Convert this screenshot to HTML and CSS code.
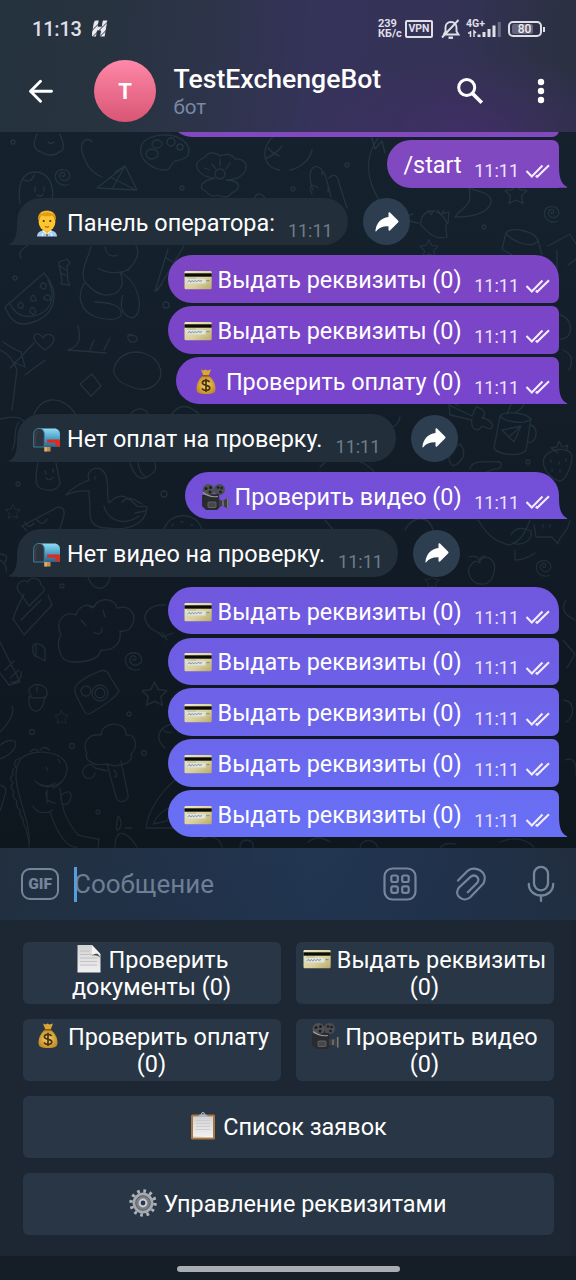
FILE: index.html
```html
<!DOCTYPE html>
<html lang="ru">
<head>
<meta charset="utf-8">
<title>TestExchengeBot</title>
<link rel="stylesheet" href="styles.css">
</head>
<body>
<svg class="defs" width="0" height="0" aria-hidden="true">
  <defs>
    <linearGradient id="gold" x1="0" y1="0" x2="1" y2="1"><stop offset="0" stop-color="#efe9c0"/><stop offset=".6" stop-color="#d8cf9c"/><stop offset="1" stop-color="#b9aa68"/></linearGradient>
    <linearGradient id="blue" x1="0" y1="0" x2="0" y2="1"><stop offset="0" stop-color="#8fdcf4"/><stop offset=".5" stop-color="#4fa3cb"/><stop offset="1" stop-color="#2b6288"/></linearGradient>
    <linearGradient id="paper" x1="0" y1="0" x2="0" y2="1"><stop offset="0" stop-color="#d2d2d2"/><stop offset="1" stop-color="#f0f0f0"/></linearGradient>
    <radialGradient id="bag"><stop offset="0" stop-color="#f7d774"/><stop offset="1" stop-color="#c58f25"/></radialGradient>
  </defs>
  <symbol id="card" viewBox="0 0 28 28">
    <rect x=".5" y="5" width="27.2" height="18.2" rx="1.2" fill="url(#gold)"/>
    <rect x=".5" y="7.3" width="27.2" height="3.4" fill="#0b0b08"/>
    <rect x="2.5" y="13" width="19" height="4.5" fill="#dfe4dc"/>
    <path d="M3.5 16l2-1.6 1 1.6 2-1.4 1 1.2 2-1.2 1 1 2-1.2 1.500 1 2-1M22.500 14.700h3" fill="none" stroke="#4d6b95" stroke-width=".7"/>
    <path d="M3 12h9" stroke="#a59e70" stroke-width=".6"/>
  </symbol>
  <symbol id="money" viewBox="0 0 28 28">
    <path d="M9 1.500l2.500 1 2-1 2 1 3.500-1-2.500 6.500h-5z" fill="#d9a637"/>
    <path d="M10.500 8h6.500c4 3 6.500 8 6.500 12.500 0 4-2 5.500-9.500 5.500s-9.500-1.500-9.500-5.500C4.500 16 7 11 10.500 8z" fill="url(#bag)"/>
    <path d="M10.500 7.800h6.800" stroke="#8a5a1c" stroke-width="1.600"/>
    <path d="M17.600 14c-1-1.300-2.200-1.700-3.700-1.700-2 0-3.500 1-3.500 2.500 0 3.500 7.400 1.500 7.400 5 0 1.600-1.700 2.600-3.800 2.600-1.700 0-3.100-.6-4-1.900M14 10.700v13.400" fill="none" stroke="#4a3210" stroke-width="1.700"/>
  </symbol>
  <symbol id="man" viewBox="0 0 28 28">
    <path d="M4 27.500c0-3.500 2-5.500 6-6h8c4 .5 6 2.500 6 6z" fill="#a9cdf0"/>
    <path d="M10.500 19h7v3.500l-3.500 2.500-3.500-2.500z" fill="#f3b52e"/>
    <path d="M9.500 21.500l4.500 3.500 4.500-3.500M9 27l1-3M19 27l-1-3" fill="none" stroke="#e8f3fd" stroke-width="1.300"/>
    <path d="M14 24.800v2.700" stroke="#6d573a" stroke-width="1.400"/>
    <ellipse cx="14" cy="12.800" rx="8.400" ry="9.300" fill="#fdc62f"/>
    <path d="M5.300 12C4 5.500 8 1.500 14 1.500S24 5.500 22.700 12c-.8-3.500-2-5-3.500-5.500-4 1.300-8 1-10.500 0-1.600 1-2.700 2.500-3.400 5.500z" fill="#e39c16"/>
    <path d="M8 4.500c3-2.300 8-2.500 11.500 0" stroke="#f9cf58" fill="none"/>
    <circle cx="10.700" cy="12" r="1.100" fill="#50351a"/><circle cx="17.300" cy="12" r="1.100" fill="#50351a"/>
    <path d="M12 17.500c1.300.8 2.700.8 4 0" stroke="#b0501e" fill="none" stroke-width="1.200"/>
  </symbol>
  <symbol id="mail" viewBox="0 0 28 28">
    <path d="M11 20h6.500v6.500H11z" fill="#c08d52"/><path d="M13 21v5.500" stroke="#e3bc84" stroke-width="1.300"/>
    <path d="M6 3.500h15c4 0 6 2.500 6 6V22H9z" fill="url(#blue)"/>
    <path d="M.7 22V9.500C.7 5.500 3 3.500 6 3.500s5.300 2 5.300 6V22z" fill="#2a3440" stroke="#3f7f9e"/>
    <path d="M2.700 20v-9c0-3 1.500-4.500 3.300-4.500" fill="none" stroke="#4c3b38" stroke-width="1.200"/>
    <path d="M14 14.500h12.800v7h-4.300v-3.800H14z" fill="#df2b1c"/>
  </symbol>
  <symbol id="cam" viewBox="0 0 28 28">
    <circle cx="7.500" cy="7" r="6" fill="#4f5155"/><circle cx="18.500" cy="6.500" r="5.500" fill="#4b4d51"/>
    <g fill="#1d1e21"><circle cx="5" cy="5.500" r="1.500"/><circle cx="9.500" cy="4.500" r="1.500"/><circle cx="9" cy="9" r="1.500"/><circle cx="17" cy="4.500" r="1.300"/><circle cx="20.500" cy="5" r="1.300"/><circle cx="19.500" cy="9" r="1.300"/></g>
    <path d="M1 12l17-1 1 13-3 3H5l-4-4z" fill="#2a2b2e"/>
    <path d="M2 9.500c4 3 9 5 15 4" fill="none" stroke="#9b9da0" stroke-width="1.200"/>
    <path d="M18 17l4 .5 5.500-3v11.500l-5.500-3-4 .5z" fill="#3c3e42"/>
    <path d="M26.800 15v10.500M22 17.500v5.500" stroke="#85878b" stroke-width="1.200"/>
    <rect x="7" y="19" width="8" height="5.500" rx="1" fill="#45474b" stroke="#6b6d71" stroke-width=".8"/>
  </symbol>
  <symbol id="doc" viewBox="0 0 28 28">
    <path d="M2.500 0H17l8.500 9v18.500h-23z" fill="url(#paper)"/>
    <path d="M5 6h10M5 9.500h12M5 13h17M5 16.500h17M5 20h17" stroke="#bdbdbd" stroke-width=".9"/>
    <path d="M17 0l8.500 13c-2.500-2.500-5-3-8.500-2.500z" fill="#4b4b4b"/>
    <path d="M17 0l8.500 9.300c-3-.8-5-.8-8.500.7z" fill="#f3f3f3"/>
  </symbol>
  <symbol id="clip" viewBox="0 0 28 28">
    <rect x="2" y="2.500" width="24" height="25" rx="1.500" fill="#a87844"/>
    <path d="M4 4.500h20v20H4z" fill="url(#paper)"/>
    <path d="M4 24.500l20-.5v1.500H4z" fill="#fff"/>
    <path d="M7 8.500h14M7 11.500h14M7 14.500h14M7 17.500h14" stroke="#c8c8cc" stroke-width=".8"/>
    <path d="M8 5l3-2.500h6L20 5z" fill="#a9b6c5"/><circle cx="14" cy="2" r="1.500" fill="none" stroke="#b5c0cd"/>
  </symbol>
  <symbol id="gear" viewBox="0 0 28 28">
    <circle cx="14" cy="14" r="12" fill="none" stroke="#aeb4be" stroke-width="3.400" stroke-dasharray="2.700 3.583"/>
    <circle cx="14" cy="14" r="10.500" fill="#a5a9b0"/><circle cx="14" cy="14" r="7.300" fill="#7b7e83" stroke="#5c5f65"/>
    <circle cx="14" cy="14" r="3.400" fill="#293746" stroke="#c9ced6" stroke-width="2"/>
  </symbol>
  <symbol id="ticks" viewBox="0 0 26 16"><path d="M1.500 8l5.300 5.500L17.500 2.500M10.800 12.600l1.400 1.200L24 2.300" fill="none" stroke="#f3ecff" stroke-width="2.100"/></symbol>
  <symbol id="share" viewBox="0 0 24 20"><path d="M13.500 1.200c0-1 .8-1.300 1.500-.6l8 7.900c.7.700.7 1.300 0 2l-8 7.900c-.7.700-1.500.4-1.500-.6v-3.600C8 14 4 15.500 1.200 19.200.8 19.700.3 19.500.4 18.900 1.300 11 6 5.900 13.500 5z" fill="#fff"/></symbol>
  <symbol id="star" viewBox="-12 -12 24 24"><path d="M0-11l3.300 6.600 7.700 1-5.500 5.300 1.500 7.600L0 6l-7 3.500 1.500-7.600L-11-3.400l7.700-1z"/></symbol>
  <symbol id="swirl" viewBox="-10 -10 20 20"><path d="M6 8C0 11-8 7-8.500 0S-3-9 2-8s8 8 3 11-10-1-9-5 6-4 6-1-3 3-3 1"/></symbol>
</svg>

<div class="phone">
  <header class="top">
    <div class="status">
      <span class="clock">11:13</span><span class="brand">H</span>
      <span class="speed">239<br>КБ/с</span>
      <span class="vpn">VPN</span>
      <svg class="bell" width="20" height="21" viewBox="0 0 20 21" fill="none" stroke="#e0dfe8" stroke-width="1.900"><path d="M3 15.500h14.500l-2-3V8.500c0-3-2-5.500-5.500-5.500S4.500 5.500 4.500 8.500v4L2.500 16M1 18.500L17.500 1"/><path d="M7.500 18.700h4.500" stroke-width="2.400"/></svg>
      <span class="signal"><b>4G+</b>
        <svg width="34" height="16" viewBox="0 0 34 16"><path d="M1 11h2M3.500 9v6M7 15V9l2 2" stroke="#e0dfe8" stroke-width="1.500" fill="none"/><path d="M12 12.500V15M17 10v5M22 7v8M27 3.500V15" stroke="#e0dfe8" stroke-width="3"/><path d="M32.300 0v15" stroke="#6c6985" stroke-width="3"/></svg>
      </span>
      <span class="battery"><i>80</i></span>
    </div>
    <div class="bar">
      <svg class="back" width="26" height="26" viewBox="0 0 26 26" fill="none" stroke="#fff" stroke-width="2.900" stroke-linecap="round" stroke-linejoin="round"><path d="M23.500 13.300H3M12.500 3.300L2.500 13.300l10 10"/></svg>
      <div class="avatar">T</div>
      <div class="who"><h1>TestExchengeBot</h1><p>бот</p></div>
      <svg class="search" width="28" height="28" viewBox="0 0 28 28" fill="none" stroke="#fff" stroke-width="3"><circle cx="10.700" cy="10.500" r="8"/><path d="M16.500 16.500l9.300 9.300" stroke-width="3.700"/></svg>
      <svg class="more" width="8" height="26" viewBox="0 0 8 26" fill="#fff"><circle cx="4" cy="4" r="3.200"/><circle cx="4" cy="13" r="3.200"/><circle cx="4" cy="22" r="3.200"/></svg>
    </div>
  </header>

  <main class="chat">
    <svg class="doodles" width="576" height="716" viewBox="0 132 576 716" fill="none" stroke="#243541" stroke-width="1.300" stroke-linecap="round" stroke-linejoin="round">
      <path d="M37 134c-5 10-3 16 4 18 6 4 14 4 18 0 6-1 5-8 1-18M48 142c2 2 4 2 6 0"/>
      <path d="M92 142c-2-4-8-3-10 2s1 12 4 18c3 8 9 12 16 15M97 188l28-22 12 24-40-2zM125 166l-13 23M110 177l26 13M125 166l-10 6"/>
      <path d="M141 147c2-9 16-13 27-12 12 1 21 8 21 16s-9 9-14 10c-5 2-4 9-9 9-14 0-28-11-25-23z"/><ellipse cx="157" cy="144" rx="5" ry="4"/><circle cx="171" cy="142" r="4"/><circle cx="180" cy="147" r="3"/><ellipse cx="152" cy="154" rx="6" ry="5"/>
      <path d="M215 178c-12 0-20-8-18-15 2-5 8-4 9-7 3-5 11-3 14 0 5-3 12-2 15 3 6-1 12 3 11 9-1 7-9 12-20 12 8 0 14 3 12 8-1 4-6 3-8 7-4 4-10 1-12 0-6 3-10-1-12-4-6-1-9-9 9-13z"/><circle cx="220" cy="174" r="5"/><path d="M212 164l4 5M220 159v7M230 163l-4 6M204 168l6 2"/>
      <path d="M20 204c-3-18 2-32 15-32s20 12 17 30M35 187v5M44 187v4M37 195q4 3 6-1M24 180q8 3 10-5"/>
      <path d="M278 134c-18 8-18 34 2 36M266 158q8-2 16-12M254 202c1-10 6-10 11-4l8 7M290 170c10-2 20-10 22-20M268 148q5 6 12 8"/>
      <path d="M313 190c-6-16-2-25 5-23s9 14 13 30M318 188c-8-6-9-1-6 6M329 178c5-6 9-2 10 5l8 25M322 172v3M328 188v4M320 201l6 5"/>
      <path d="M378 138c-14 20-12 40 1 62M371 135l4 14 7-8 3 12"/>
      <path d="M413 214c-8 2-6 8 6 9M443 213c8 0 6-5 5 10-4 0-1 13-1 14-12 4-20-6-26-12-2-14 17-22 26-2M428 210l3 5 3-5M438 210l3 5 3-5M469 188c8 3 24 5 22 15-4 10-18 14-36 14 8-12 18-9 14-29z"/>
      <path d="M506 233c5-7 28-2 32 7M506 233c4 8 28 17 32 7M506 233l-4 16 10 6M538 240l4 15M548 246l22-12 6 10M557 250v20M568 265l8-6"/>
      <path d="M21 258c-4-7 3-9 8-14M59 262l8-3 3 4-3 3 1 15 2 4-9-1 1-4-3-15zM60 266l6 4M61 273l6 3"/>
      <path d="M5 307l39-34c20 24 8 48-20 51-10 0-15-7-19-17zM9 302c5 10 12 18 29 13 14-6 18-18 10-35M42 283q5 0 4 4t-6 0zM33 295q-5 5 0 6t2-4zM46 295q-5 4 1 5t2-5zM20 302q-4 5 0 6t3-4zM31 308q-3 5 2 6t1-6z"/>
      <path d="M91 246c-2 12-12 24-6 36-9 14-5 29 11 35 10 3 22 4 25-2 3-10-15-13-26-13M105 247q2 12 13 8M122 272q9-2 14-13c3-6 2-9 0-13M98 268q13 8 31 2M86 283q14 17 30 10 10-7 4-21c22 12 24 43 12 46-12-3-12-15-9-23"/>
      <path d="M155 291l13-42M157 291l27-45M166 258l7 4M155 291l7-7"/>
      <path d="M45 350c-22-16-5-20-2-12 4-9 21 0 2 12zM78 326c3 13 2 20-10 24l38 3M90 350l4-10M3 342q12 8 18 10l4 15-12-5M104 350l6-12M133 336c-8-6-6 8 1 6s1-9-4-6M10 368l24-25M25 375l20-15"/>
      <path d="M120 358c14-12 36-4 40 10s-10 25-26 20-28-15-14-30zM0 350q12 5 17 20l-5 40M0 419q20-5 24 3M80 384l12-10 9 12-10 10zM33 418c5-22 30-25 43-3M12 450c6-9 0-20 7-28"/>
      <path d="M171 415q12-17 29 0M130 416q3-8 12-7c7 2 6 5 4 7M38 463c-3 14-3 22 2 25 10 5 19 1 20-5l-4-20M45 471l1 3M53 469v3M46 478q4 4 7-1M130 463c4 13 11 18 17 14 7-4 10-6 8-14M138 463q2 12 8 14"/>
      <path d="M89 480c-5-12 15-19 18 0 2 13-1 14 2 23 12-13 20-5 28 3 5 2 8-1 10 1-1 18-20 24-40 21-15 0-18-8-17-20l-1-17q-12-1-23 4 9-10 23-15M104 506c3 14 20 21 35 10M122 502c7-7 13-2 20 2M135 513l10-2M95 477v2"/>
      <path d="M22 526l36-19q7 0 6 8l-4 14M22 526l5 5M25 522q4 8 9 1M37 520q6 7 10-1M164 530c4-18 33-20 38 0M172 526l1-2M181 522h2M191 525h2"/>
      <path d="M0 560q8 5 6 12M0 554q10 1 5 8M18 590c-3-6 5-12 10-8 3-6 13-4 13 3 4 2 4 6 1 8L29 606zM88 577c5 16 20 14 22 0M13 620c2-10 7-17 11-26M14 620l10 15 28-30-4-10M21 620l20-20"/>
      <path d="M60 652c-4-12 0-15 1-17-7-15 4-24 15-20 2-8 12-13 17-7 6-12 22-10 24 0 14-4 20 8 15 17-2 5-7 7-12 6 2 12-6 20-19 19-2 10-17 12-27 12-8 0-13-4-14-10zM81 620l5 6M103 610l2 7M94 632q8 5 8-4M95 606l-5 1"/>
      <path d="M0 642l20 40-11 3-9-12M14 661l-9 9M19 670l-9 8M11 682c8 1 11-5 10-10M33 648q-1 8 5 9l7 4v-8c2-10-14-12-12-5M36 645v10"/>
      <path d="M145 619c-1-8 8-15 20-14M145 619c2 8 8 11 14 14l4 4 10-4M162 632l5 8"/>
      <path d="M31 695c-6-6 2-12 10-10 7 2 8 10 3 14 0 10-7 14-11 11-5-2-4-9-4-13zM29 697q9 2 16 0M37 687v5"/>
      <path d="M75 687q5-8 25-16 7-2 9 4l10 16q-4 8-28 22-5 3-8-4l-8-16z"/><circle cx="86" cy="691" r="5"/><circle cx="100" cy="693" r="8"/><circle cx="100" cy="693" r="5"/>
      <path d="M107 764c-15 3-23-5-20-11-5-8 0-20 14-18 0-14 26-15 25 0 11-2 12 14 5 19 3 9-10 11-16 12zM107 764l9 33c2 8 14 4 12-2l-7-34M107 771l-12-3c-5-8-14 0-12 6s11 6 12-1M114 770q5 6 1 7"/>
      <path d="M29 847c4-29-23-65-9-87 8-12 46-11 47 8 0 8-6 18-14 20M35 781c10 10 26 6 31-6M40 784q8 4 15-1M47 790c-3 8 1 12 8 13M47 791l0 12M60 788c2 20 4 30 18 47q16 4 21 4l-1 8M50 812c8 24 18 36 27 35M33 806c4 8 13 8 20 4M61 800c-2-9 12-11 10-3-2 8-5 8-9 7M46 767l2 4M58 759l2 4"/>
      <path d="M20 758l-4 2q-3 4 0 7-5 2-3 8-5 3 0 8-4 4 1 9-3 4 3 9-2 5 3 9-1 5 3 9 0 6 3 9l1 6 2 8M30 752q4-5 8-1M40 750q5-5 9 0"/>
      <path d="M0 745q8-6 14-4c5 2 0 13-14 18M0 785q8 2 5 10l-5 16M12 706q4 10-12 26"/>
      <path d="M171 724c-14 4-16 16-6 24M163 730q5 4 9 2M175 780c-14 12-27 30-29 48h28M153 824c5-12 15-16 20-18l-6 15zM118 816c5 5 3 12 0 14s-1-9 0-14M125 828h7M115 847c0-20 12-16 22 0"/>
      <path d="M400 417c-2 8-5 9-8 10M450 415l-1-10 23 11 4-9c10 2 10 8 6 11 8 1 14 8 8 11l-8-3c-4 7-12 3-10-6zM458 405l-8-3"/>
      <path d="M500 416l-6 32c2 6 25 10 32 2l5-31c-5-6-25-9-31-3zM500 416c5 6 25 9 31 3M530 425c9 0 8 20-3 17M502 430l19-4-7 16-5-5zM521 426l-12 11M507 414l5-12M516 412q8-4 8-10"/>
      <path d="M544 458c4-10 26-12 28-2 0 10-7 25-12 25-10-2-19-14-16-23zM558 453l-7-5 6-1 2-6 3 6 6-2-2 6M551 460v2M559 462v2M566 459v2M552 469v2M560 470v2"/>
      <path d="M460 444c-12 6-14 15-7 22 9-4 15-12 7-22zM470 469c1-8 12-8 30-7 3 4 0 8-6 7l-10 4M320 467c12-15 44-10 55 6M325 520l10 12 18 4M405 530c8-15 24-15 28 0M478 520c8 13 16 22 32 25 12-5 15-12 20-25M511 535c4-8 12-8 20-4 2 8-8 16-18 12M534 525l2 12h16l6 7c0-8 10-10 12-24M543 525v2M550 525v2M515 550v10q10 0 20-7"/>
      <path d="M479 562c7-10 18-2 15 10-1 9-8 13-13 12-10 0-16-13-10-19q3-5 8-3zM480 563q-2-6 5-7M480 561q-4-7-11-4"/>
      <use href="#swirl" x="54" y="168" width="18" height="18"/><use href="#swirl" x="543" y="205" width="18" height="18"/><use href="#swirl" x="534" y="559" width="20" height="18"/><use href="#swirl" x="124" y="651" width="20" height="20"/>
      <use href="#star" x="504" y="182" width="24" height="24"/><use href="#star" x="5" y="504" width="16" height="16"/><use href="#star" x="141" y="681" width="27" height="27"/><use href="#star" x="54" y="710" width="15" height="15"/><use href="#star" x="419" y="239" width="20" height="20"/><use href="#star" x="424" y="574" width="16" height="16"/>
      <g><circle cx="13" cy="142" r="2"/><circle cx="182" cy="188" r="2"/><circle cx="347" cy="165" r="2"/><circle cx="293" cy="189" r="2"/><circle cx="484" cy="227" r="2"/><circle cx="15" cy="278" r="2"/><circle cx="166" cy="305" r="3"/><circle cx="18" cy="484" r="2"/><circle cx="164" cy="494" r="3"/><circle cx="528" cy="462" r="2"/><circle cx="62" cy="586" r="2"/><circle cx="32" cy="732" r="2.500"/><circle cx="72" cy="746" r="2.500"/><circle cx="129" cy="714" r="2"/><circle cx="144" cy="753" r="2.500"/><circle cx="98" cy="812" r="2"/></g>
      <path d="M560 315c14 3 14 25 0 24M563 350c10 4 10 12 6 20M566 600q-8 12 9 20M563 640l12 14-8 14M564 700c12 2 10 18 2 22M565 760q12-5 11 15M200 840c10-8 22 0 22 8M240 848q0-8 7-8 7 1 6 8M308 842q10-8 22 0M360 848c0-10 16-10 18 0M440 848q4-6 16-4M500 842q20-8 34 5"/>
    </svg>

    <div class="row out cut"><div class="bubble wide"></div></div>
    <div class="row out"><div class="bubble mid tail"><span class="msg">/start</span><time>11:11</time><svg class="ticks"><use href="#ticks"/></svg></div></div>
    <div class="row in gap"><div class="bubble tail"><svg class="emoji"><use href="#man"/></svg><span class="msg">Панель оператора:</span><time>11:11</time></div><span class="share"><svg width="24" height="20"><use href="#share"/></svg></span></div>
    <div class="row out gap"><div class="bubble"><svg class="emoji"><use href="#card"/></svg><span class="msg">Выдать реквизиты (0)</span><time>11:11</time><svg class="ticks"><use href="#ticks"/></svg></div></div>
    <div class="row out"><div class="bubble mid"><svg class="emoji"><use href="#card"/></svg><span class="msg">Выдать реквизиты (0)</span><time>11:11</time><svg class="ticks"><use href="#ticks"/></svg></div></div>
    <div class="row out"><div class="bubble mid tail"><svg class="emoji"><use href="#money"/></svg><span class="msg">Проверить оплату (0)</span><time>11:11</time><svg class="ticks"><use href="#ticks"/></svg></div></div>
    <div class="row in gap"><div class="bubble tail"><svg class="emoji"><use href="#mail"/></svg><span class="msg">Нет оплат на проверку.</span><time>11:11</time></div><span class="share"><svg width="24" height="20"><use href="#share"/></svg></span></div>
    <div class="row out gap"><div class="bubble tail"><svg class="emoji"><use href="#cam"/></svg><span class="msg">Проверить видео (0)</span><time>11:11</time><svg class="ticks"><use href="#ticks"/></svg></div></div>
    <div class="row in gap"><div class="bubble tail"><svg class="emoji"><use href="#mail"/></svg><span class="msg">Нет видео на проверку.</span><time>11:11</time></div><span class="share"><svg width="24" height="20"><use href="#share"/></svg></span></div>
    <div class="row out gap"><div class="bubble"><svg class="emoji"><use href="#card"/></svg><span class="msg">Выдать реквизиты (0)</span><time>11:11</time><svg class="ticks"><use href="#ticks"/></svg></div></div>
    <div class="row out"><div class="bubble mid"><svg class="emoji"><use href="#card"/></svg><span class="msg">Выдать реквизиты (0)</span><time>11:11</time><svg class="ticks"><use href="#ticks"/></svg></div></div>
    <div class="row out"><div class="bubble mid"><svg class="emoji"><use href="#card"/></svg><span class="msg">Выдать реквизиты (0)</span><time>11:11</time><svg class="ticks"><use href="#ticks"/></svg></div></div>
    <div class="row out"><div class="bubble mid"><svg class="emoji"><use href="#card"/></svg><span class="msg">Выдать реквизиты (0)</span><time>11:11</time><svg class="ticks"><use href="#ticks"/></svg></div></div>
    <div class="row out"><div class="bubble mid tail"><svg class="emoji"><use href="#card"/></svg><span class="msg">Выдать реквизиты (0)</span><time>11:11</time><svg class="ticks"><use href="#ticks"/></svg></div></div>
  </main>

  <div class="compose">
    <span class="gif">GIF</span>
    <span class="field">Сообщение</span>
    <svg class="grid" width="34" height="34" viewBox="0 0 34 34" fill="none" stroke="#75859b" stroke-width="2.200"><rect x="1.500" y="1.500" width="31" height="31" rx="8"/><rect x="8.300" y="8.500" width="6.500" height="6.500" rx="1.800"/><rect x="19.200" y="8.500" width="6.500" height="6.500" rx="1.800"/><rect x="8.300" y="19.300" width="6.500" height="6.500" rx="1.800"/><rect x="19.200" y="19.300" width="6.500" height="6.500" rx="1.800"/></svg>
    <svg class="attach" width="30" height="34" viewBox="0 0 30 34" fill="none" stroke="#75859b" stroke-width="2.200" stroke-linecap="round"><path d="M2 13.500L11.500 4C18-2 33 4 27.500 16.500L14 30.500C7 36-3 28 3 20.500L15 9.500c5-3 9 2 6.500 6L11.800 25.300"/></svg>
    <svg class="mic" width="28" height="38" viewBox="0 0 28 38" fill="none" stroke="#75859b" stroke-width="2.300" stroke-linecap="round"><rect x="7" y="1.800" width="14" height="23.500" rx="7"/><path d="M1.800 19c0 7 5.500 11.500 12.200 11.500S26.200 26 26.200 19M14 30.500v5.500"/></svg>
  </div>

  <section class="keyboard">
    <button><svg class="emoji"><use href="#doc"/></svg>Проверить<br>документы (0)</button>
    <button><svg class="emoji"><use href="#card"/></svg>Выдать реквизиты<br>(0)</button>
    <button><svg class="emoji"><use href="#money"/></svg>Проверить оплату<br>(0)</button>
    <button><svg class="emoji"><use href="#cam"/></svg>Проверить видео<br>(0)</button>
    <button class="full"><svg class="emoji"><use href="#clip"/></svg>Список заявок</button>
    <button class="full"><svg class="emoji"><use href="#gear"/></svg>Управление реквизитами</button>
  </section>
  <footer class="nav"><span></span></footer>
</div>
</body>
</html>
```
FILE: styles.css
```css
* { box-sizing: border-box; }
body { margin: 0; background: #151e28; font-family: Roboto, "Noto Sans", sans-serif; color: #fff; }
svg { display: block; flex: none; }
.defs { position: absolute; }
.phone { width: 576px; height: 1280px; display: flex; flex-direction: column; overflow: hidden; }

.top {
  height: 132px; flex: none; display: flex; flex-direction: column;
  background:
    radial-gradient(ellipse 190px 75px at 475px 128px, rgba(66, 46, 105, .75), transparent),
    linear-gradient(95deg, #25333f 0, #27333f 18%, #2e344b 38%, #35335a 55%, #343255 78%, #2b3143 96%, #28303f 100%);
}
.status { height: 58px; display: flex; align-items: center; padding: 0 34px 0 32px; color: #e0dfe8; }
.clock { font-size: 20px; font-weight: 500; letter-spacing: -.2px; width: 60px; }
.brand {
  font-size: 21px; line-height: 24px; font-weight: 900; font-style: italic; width: 22px; flex: none;
  background: repeating-linear-gradient(135deg, #eceaf0 0 4px, #8b8f9b 4px 5px);
  -webkit-background-clip: text; background-clip: text; color: transparent; -webkit-text-stroke: 1px transparent;
}
.speed { margin-left: auto; font-size: 11px; line-height: 10.500px; font-weight: 700; width: 27px; white-space: nowrap; }
.vpn { border: 2px solid #e0dfe8; border-radius: 2px; width: 28px; height: 18px; font-size: 10.500px; line-height: 14px; font-weight: 700; text-align: center; }
.bell { margin-left: 8px; }
.signal { position: relative; width: 36px; margin-left: 4px; height: 18px; padding: 2px 0 0 2px; }
.signal b { position: absolute; left: 1px; top: -1px; font-size: 10.500px; line-height: 10px; }
.battery { margin-left: 7px; width: 34px; height: 16px; border: 2px solid #e0dfe8; border-radius: 5px; padding: 1px 7px 1px 2px; position: relative; }
.battery i { display: block; font: 500 12px/10px Roboto, sans-serif; text-align: center; background: #66637b; border-radius: 2px; padding-left: 4px; color: #eee; }
.battery::after { content: ""; position: absolute; right: -4.500px; top: 4px; width: 2px; height: 5px; background: #e0dfe8; }
.bar { flex: 1; display: flex; align-items: center; padding: 0 31px 8px 28px; }
.avatar { width: 62px; height: 62px; margin-left: 40px; border-radius: 50%; background: linear-gradient(#ff88a8, #d95574); font-size: 22px; font-weight: 700; line-height: 63px; text-align: center; }
.who { margin-left: 17.500px; flex: 1; }
.who h1 { margin: 0; font-size: 26.600px; line-height: 31px; font-weight: 500; }
.who p { margin: 0; font-size: 20.500px; line-height: 26px; color: #7889a5; }
.search { margin-right: 53px; }

.chat { position: relative; height: 716px; flex: none; overflow: hidden; background: linear-gradient(#15222e, #121c27 50%, #0e161e); }
.doodles { position: absolute; left: 0; top: 0; -webkit-mask-image: linear-gradient(#000, rgba(0,0,0,.6)); mask-image: linear-gradient(#000, rgba(0,0,0,.6)); }
.row { position: relative; display: flex; height: 47.500px; margin-top: 3.250px; align-items: center; }
.row.gap { margin-top: 10px; }
.out { justify-content: flex-end; padding-right: 17px; }
.in { padding-left: 17px; }
.row.cut { height: 5px; margin-top: 0; align-items: flex-end; }
.bubble { position: relative; height: 47.500px; display: flex; align-items: center; padding: 0 8px 0 16px; border-radius: 24px; white-space: nowrap; }
.out .bubble {
  border-bottom-right-radius: 7px;
  background: linear-gradient(#8249bf 130px, #7b45c5 280px, #7845cc 390px, #7350d8 500px, #7059e0 610px, #6870f5 830px) fixed;
}
.out .bubble.mid { border-top-right-radius: 7px; }
.bubble.wide { width: 390px; flex: none; }
.in .bubble { background: #222e3a; padding-right: 15.500px; border-bottom-left-radius: 0; }
.out .bubble.tail { border-bottom-right-radius: 0; }
.tail::after { content: ""; position: absolute; bottom: 0; width: 10px; height: 22px; background: inherit; }
.out .tail::after { right: -9px; clip-path: path("M0 0H1C1 12 3 18 9 21Q10 22 8 22H0Z"); }
.in .tail::after { left: -9px; clip-path: path("M10 0H9C9 12 7 18 1 21Q0 22 2 22H10Z"); }
.emoji { width: 28px; height: 28px; margin: 2px 6px 0 0; }
.msg { font-size: 23.400px; line-height: 28px; padding-top: 2px; }
time { font-size: 18px; line-height: 20px; margin: 14px 0 0 12.500px; color: #eee3fb; }
.in time { color: #6f7c89; margin: 18px 0 0 13px; }
.ticks { width: 26px; height: 16px; margin: 13px 0 0 6px; }
.share { width: 47px; height: 47px; margin-left: 15px; border-radius: 50%; background: #2d3e50; display: grid; place-items: center; }

.compose { height: 72px; flex: none; display: flex; align-items: center; padding: 0 21px 0 21px; background: linear-gradient(#25364a00, #1c304840), linear-gradient(90deg, #222f3e, #22324a 35%, #223652 55%, #21314a 80%, #222e3f); }
.gif { width: 38px; height: 32px; border: 2.200px solid #75859b; border-radius: 9px; color: #75859b; font-size: 15.500px; font-weight: 900; line-height: 28px; text-align: center; }
.field { margin-left: 15px; flex: 1; font-size: 26px; line-height: 35px; color: #6d7e95; position: relative; }
.field::before { content: ""; position: absolute; left: 0; top: 0; width: 3px; height: 35px; background: #529fdb; }
.attach { margin-left: 39px; }
.mic { margin-left: 41px; }

.keyboard { height: 336px; flex: none; display: grid; grid-template-columns: 1fr 1fr; grid-auto-rows: 62px; gap: 15px; padding: 22px 22.500px; background: linear-gradient(90deg, #1d2733 570px, #1a232e 570px); }
.keyboard button { border: 0; border-radius: 6px; background: #293645; color: #fff; font: 23.450px/27.500px Roboto, "Noto Sans", sans-serif; padding: 2px 0 0; white-space: nowrap; }
.keyboard .emoji { display: inline-block; vertical-align: -5px; margin: -2px 6px 0 0; }
.full { grid-column: span 2; }
.nav { height: 24px; background: #151e27; display: flex; justify-content: center; padding-top: 9.500px; }
.nav span { width: 223px; height: 6px; border-radius: 3px; background: #a9adb2; }
```
